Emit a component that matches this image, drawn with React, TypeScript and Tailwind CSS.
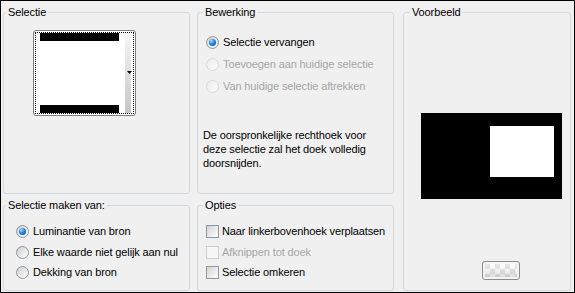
import React from "react";

function Radio({ checked, disabled, label }: { checked?: boolean; disabled?: boolean; label: string }) {
  return (
    <div className="flex items-center h-[13px]">
      <span
        className={
          disabled
            ? "flex items-center justify-center w-[13px] h-[13px] shrink-0 rounded-full border border-[#d9d9d9] bg-[linear-gradient(135deg,#ececec,#fbfbfb)]"
            : "flex items-center justify-center w-[13px] h-[13px] shrink-0 rounded-full border border-[#8e98a2] bg-[linear-gradient(135deg,#cdcdcd,#ffffff)]"
        }
      >
        {checked && (
          <span className="w-[7px] h-[7px] rounded-full bg-[radial-gradient(circle_at_35%_30%,#a8dcff_0%,#2f8ae8_40%,#0a4596_100%)]" />
        )}
      </span>
      <span className={disabled ? "ml-[4px] whitespace-nowrap text-[#a6a6a6]" : "ml-[4px] whitespace-nowrap text-black"}>{label}</span>
    </div>
  );
}

function Check({ disabled, label }: { disabled?: boolean; label: string }) {
  return (
    <div className="flex items-center h-[13px]">
      <span
        className={
          disabled
            ? "w-[13px] h-[13px] shrink-0 border border-[#cfcfcf] bg-[#f6f6f6]"
            : "w-[13px] h-[13px] shrink-0 border border-[#8e98a2] bg-[linear-gradient(135deg,#d2d2d2,#ffffff)]"
        }
      />
      <span className={disabled ? "ml-[3px] whitespace-nowrap text-[#a6a6a6]" : "ml-[3px] whitespace-nowrap text-black"}>{label}</span>
    </div>
  );
}

export default function App() {
  return (
    <div className="w-[575px] h-[293px] border border-black bg-[#f0f0f0] flex pl-[2px] pt-[5px] text-[11px] leading-[13px] tracking-[-0.12px] text-black font-['Liberation_Sans',Arial,sans-serif]">
      {/* Left column */}
      <div className="w-[187px] flex flex-col gap-[5px]">
        <fieldset className="h-[188px] border border-[#d3d9de] rounded-[3px]">
          <legend className="ml-[2px] px-[2px]">Selectie</legend>
          <div className="ml-[29px] mt-[11px] w-[103px] h-[86px] border border-[#7f7f7f] rounded-[3px] bg-white p-[1px]">
            <div className="w-full h-full border border-dotted border-black flex">
              <div className="w-[89px] h-full flex flex-col">
                <div className="ml-[4px] w-[79px] h-[8px] bg-black" />
                <div className="ml-[4px] mt-auto w-[79px] h-[8px] bg-black" />
              </div>
              <div className="w-[6px] h-full bg-[linear-gradient(180deg,#f6f6f6,#c6c6c6)] flex flex-col items-center pt-[38px]">
                <svg width="5" height="3" viewBox="0 0 5 3" className="ml-[2px]">
                  <polygon points="0,0 5,0 2.5,3" fill="#000" />
                </svg>
              </div>
            </div>
          </div>
        </fieldset>
        <fieldset className="h-[92px] border border-[#d3d9de] rounded-[3px]">
          <legend className="ml-[2px] px-[2px]">Selectie maken van:</legend>
          <div className="ml-[12px] mt-[13px] flex flex-col gap-[7.5px]">
            <Radio checked label="Luminantie van bron" />
            <Radio label="Elke waarde niet gelijk aan nul" />
            <Radio label="Dekking van bron" />
          </div>
        </fieldset>
      </div>

      {/* Middle column */}
      <div className="ml-[7px] w-[197px] flex flex-col gap-[5px]">
        <fieldset className="h-[188px] border border-[#d3d9de] rounded-[3px]">
          <legend className="ml-[5px] px-[2px]">Bewerking</legend>
          <div className="ml-[8px] mt-[17px] flex flex-col gap-[9px]">
            <Radio checked label="Selectie vervangen" />
            <Radio disabled label="Toevoegen aan huidige selectie" />
            <Radio disabled label="Van huidige selectie aftrekken" />
          </div>
          <p className="ml-[5px] mt-[35px] leading-[14px]">
            De oorspronkelijke rechthoek voor
            <br />
            deze selectie zal het doek volledig
            <br />
            doorsnijden.
          </p>
        </fieldset>
        <fieldset className="h-[92px] border border-[#d3d9de] rounded-[3px]">
          <legend className="ml-[5px] px-[2px]">Opties</legend>
          <div className="ml-[8px] mt-[13px] flex flex-col gap-[7.5px]">
            <Check label="Naar linkerbovenhoek verplaatsen" />
            <Check disabled label="Afknippen tot doek" />
            <Check label="Selectie omkeren" />
          </div>
        </fieldset>
      </div>

      {/* Right column */}
      <div className="ml-[9px] w-[168px]">
        <fieldset className="h-[285px] border border-[#d3d9de] rounded-[3px]">
          <legend className="ml-[6px] px-[2px]">Voorbeeld</legend>
          <div className="ml-[17px] mt-[94px] w-[141px] h-[86px] bg-black pt-[13px] pl-[69px]">
            <div className="w-[64px] h-[51px] bg-white" />
          </div>
          <div className="ml-[78px] mt-[62px] w-[38px] h-[19px] border border-[#8a8a8a] rounded-[3px] bg-[#f4f4f4] p-[2px]">
            <svg width="32" height="13" viewBox="0 0 32 13" className="block">
              <defs>
                <pattern id="chk" width="10" height="10" patternUnits="userSpaceOnUse">
                  <rect width="10" height="10" fill="#ffffff" />
                  <rect width="5" height="5" fill="#dcdcdc" />
                  <rect x="5" y="5" width="5" height="5" fill="#dcdcdc" />
                </pattern>
                <linearGradient id="shade" x1="0" y1="0" x2="0" y2="1">
                  <stop offset="0" stopColor="#ffffff" stopOpacity="0.3" />
                  <stop offset="1" stopColor="#b8b8b8" stopOpacity="0.5" />
                </linearGradient>
              </defs>
              <rect width="32" height="13" fill="url(#chk)" />
              <rect width="32" height="13" fill="url(#shade)" />
            </svg>
          </div>
        </fieldset>
      </div>
    </div>
  );
}
